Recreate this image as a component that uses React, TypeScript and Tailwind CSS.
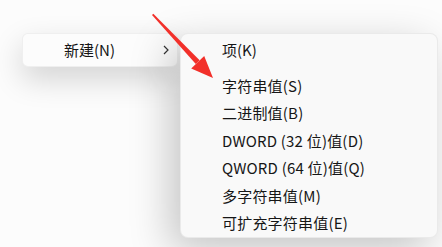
import React from 'react';

const items = [
  '字符串值(S)',
  '二进制值(B)',
  'DWORD (32 位)值(D)',
  'QWORD (64 位)值(Q)',
  '多字符串值(M)',
  '可扩充字符串值(E)',
];

const font = { fontFamily: '"Noto Sans CJK SC", "Noto Sans", sans-serif' };

export default function App() {
  return (
    <div
      className="relative w-[442px] h-[247px] overflow-hidden bg-[#fcfcfc] text-[#161616] text-[15px]"
      style={font}
    >
      <div className="flex h-full">
        <div className="w-[180px] shrink-0 pt-[33px] pl-[22px] pr-[2px]">
          <div className="flex items-center h-[34px] pl-[41px] pr-[8px] rounded-[6px] bg-[#fcfcfc] border border-black/[0.05] shadow-[0_12px_30px_rgba(0,0,0,0.17)]">
            <span className="flex-1">新建(N)</span>
            <svg width="6" height="10" viewBox="0 0 6 10">
              <path d="M1 1 L5 5 L1 9" fill="none" stroke="#333" strokeWidth="1.2" />
            </svg>
          </div>
        </div>
        <div className="mt-[33px] w-[258px] h-[205px] rounded-[8px] bg-[#f9f9f9] border border-black/[0.06] shadow-[-10px_12px_40px_rgba(0,0,0,0.22)] flex flex-col">
          <div className="h-[30px] shrink-0 flex items-center pl-[41px] pt-[3px]">项(K)</div>
          <div className="mt-[4px] mb-[4px] h-px bg-[#e2e2e2]" />
          {items.map((t) => (
            <div key={t} className="h-[27.5px] shrink-0 flex items-center pl-[41px] tracking-[0.2px]">
              {t}
            </div>
          ))}
        </div>
      </div>
      <svg className="absolute inset-0 pointer-events-none" width="442" height="247" viewBox="0 0 442 247">
        <polygon points="152,15 153.3,13.8 199.6,60.3 195.8,64.1" fill="#f2302a" />
        <polygon points="213,78 204.2,55.9 191.2,68.5" fill="#f2302a" />
      </svg>
    </div>
  );
}
